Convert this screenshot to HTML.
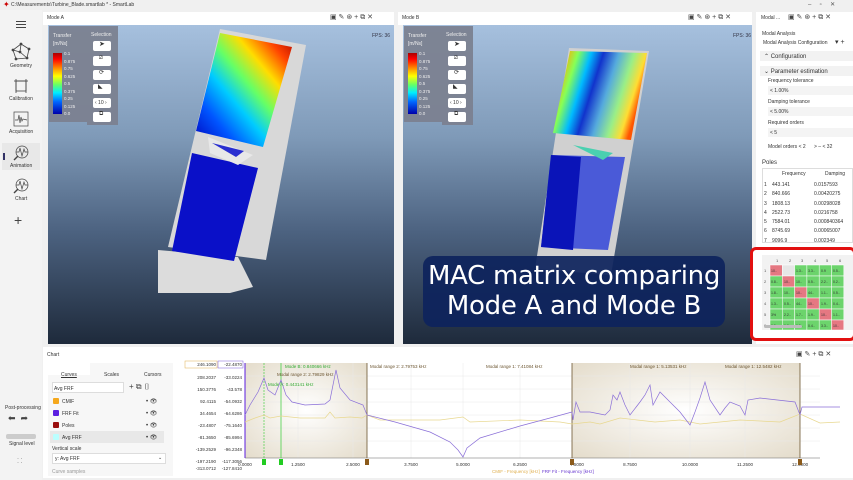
<!DOCTYPE html>
<html><head><meta charset="utf-8"><style>
*{margin:0;padding:0;box-sizing:border-box}
body{width:853px;height:480px;overflow:hidden;background:#f0f0f0;font-family:"Liberation Sans",sans-serif;font-size:5px;color:#333;position:relative}
.abs{position:absolute}
.t{position:absolute;white-space:nowrap}
.vp{background:linear-gradient(#a6c0de 0%,#7f9ab8 35%,#4c6280 65%,#1e2a3b 100%)}
.hdr{background:#fff;height:13px}
.leg{background:#7b8190;opacity:.95}
.btn{position:absolute;background:#fff;border-radius:2px;width:18px;height:10px}
</style></head><body>
<div class="t" style="left:3px;top:0;color:#c00;font-size:8px">✦</div>
<div class="t" style="left:11px;top:2px;font-size:5px">C:\Measurements\Turbine_Blade.smartlab * - SmartLab</div>
<div class="t" style="left:808px;top:1px;font-size:6px;color:#555">–&nbsp;&nbsp;&nbsp;&nbsp;&nbsp;▫&nbsp;&nbsp;&nbsp;&nbsp;&nbsp;✕</div>

<div class="abs" style="left:0;top:10px;width:42px;height:470px;background:#f3f3f3"></div>
<div class="abs" style="left:16px;top:21px;width:10px;height:1px;background:#444;box-shadow:0 3px 0 #444,0 6px 0 #444"></div>
<svg class="abs" style="left:11px;top:42px" width="20" height="20" viewBox="0 0 20 20" fill="none" stroke="#444" stroke-width=".8"><polygon points="10,2 18,7 16,16 5,17 2,8"/><line x1="10" y1="2" x2="9" y2="10"/><line x1="2" y1="8" x2="9" y2="10"/><line x1="16" y1="16" x2="9" y2="10"/><circle cx="10" cy="2" r="1" fill="#444"/><circle cx="18" cy="7" r="1" fill="#444"/><circle cx="16" cy="16" r="1" fill="#444"/><circle cx="5" cy="17" r="1" fill="#444"/><circle cx="2" cy="8" r="1" fill="#444"/><circle cx="9" cy="10" r="1" fill="#444"/></svg>
<div class="t" style="left:10px;top:63px">Geometry</div>
<svg class="abs" style="left:14px;top:79px" width="14" height="14" fill="none" stroke="#444" stroke-width=".8"><rect x="2" y="2" width="10" height="10"/><line x1="0" y1="2" x2="14" y2="2"/><line x1="2" y1="0" x2="2" y2="14"/><line x1="12" y1="0" x2="12" y2="14"/></svg>
<div class="t" style="left:9px;top:96px">Calibration</div>
<svg class="abs" style="left:13px;top:111px" width="16" height="16" fill="none" stroke="#444" stroke-width=".7"><rect x="1" y="1" width="14" height="14"/><path d="M2 9 L5 9 L6 4 L7 12 L8 6 L9 10 L10 8 L14 9"/></svg>
<div class="t" style="left:9px;top:129px">Acquisition</div>
<div class="abs" style="left:2px;top:143px;width:38px;height:27px;background:#e8e8e8"></div>
<div class="abs" style="left:3px;top:153px;width:1.5px;height:7px;background:#336"></div>
<svg class="abs" style="left:13px;top:145px" width="16" height="16" fill="none" stroke="#444" stroke-width=".7"><circle cx="9" cy="7" r="6"/><path d="M3 7 L6 7 L7 3 L9 11 L11 4 L12 7 L15 7"/><line x1="5" y1="11" x2="1" y2="15" stroke-width="1.4"/></svg>
<div class="t" style="left:10px;top:163px">Animation</div>
<svg class="abs" style="left:13px;top:178px" width="16" height="16" fill="none" stroke="#444" stroke-width=".7"><circle cx="9" cy="7" r="6"/><path d="M3 7 L6 7 L7 3 L9 11 L11 4 L12 7 L15 7"/><line x1="5" y1="11" x2="1" y2="15" stroke-width="1.4"/></svg>
<div class="t" style="left:15px;top:196px">Chart</div>
<div class="t" style="left:14px;top:212px;font-size:14px;color:#444">+</div>

<div class="abs hdr" style="left:43px;top:12px;width:351px"></div>
<div class="t" style="left:47px;top:15px">Mode A</div>
<div class="t" style="left:330px;top:13px;font-size:7px;color:#444">▣ ✎ ⊛ + ⧉ ✕</div>
<div class="abs vp" style="left:48px;top:25px;width:346px;height:319px"></div>
<svg class="abs" style="left:48px;top:25px" width="346" height="319">
<defs><linearGradient id="ga" x1="1" y1="0" x2="0" y2="1"><stop offset="0" stop-color="#a00"/><stop offset=".15" stop-color="#f40"/><stop offset=".3" stop-color="#fd0"/><stop offset=".45" stop-color="#6f6"/><stop offset=".6" stop-color="#0cf"/><stop offset=".78" stop-color="#05f"/><stop offset="1" stop-color="#00b"/></linearGradient></defs>
<polygon points="172,4 258,20 218,235 120,222" fill="#d8d8d8"/>
<polygon points="110,225 190,232 205,262 182,268 110,268" fill="#dcdcdc"/>
<polygon points="172,8 244,22 215,122 148,106" fill="url(#ga)"/>
<polygon points="144,128 210,143 186,236 124,226" fill="#0a10c8"/>
<polygon points="160,112 205,130 190,140 162,128" fill="#e8e8e8"/>
<polygon points="164,118 196,126 188,132" fill="#2a2fd0"/>
</svg>
<div class="abs leg" style="left:49px;top:26px;width:38px;height:96px"></div>
<div class="t" style="left:53px;top:33px;color:#eee">Transfer</div>
<div class="t" style="left:53px;top:41px;color:#eee">[m/Ns]</div>
<div class="abs" style="left:53px;top:53px;width:9px;height:61px;background:linear-gradient(#a00,#f00 10%,#fa0 28%,#ff0 38%,#6f6 52%,#0ef 65%,#06f 80%,#00a)"></div>
<div class="t" style="left:64px;top:50px;color:#eee;font-size:4.5px;line-height:7.5px">0.1<br>0.875<br>0.75<br>0.625<br>0.5<br>0.375<br>0.25<br>0.125<br>0.0</div>
<div class="abs leg" style="left:87px;top:26px;width:31px;height:99px"></div>
<div class="t" style="left:91px;top:32px;color:#eee">Selection</div>
<div class="btn" style="left:93px;top:41px"></div><div class="t" style="left:99px;top:40px;font-size:7px">➤</div>
<div class="btn" style="left:93px;top:56px"></div><div class="t" style="left:99px;top:55px;font-size:6px">⧄</div>
<div class="btn" style="left:93px;top:70px"></div><div class="t" style="left:99px;top:69px;font-size:6px">⟳</div>
<div class="btn" style="left:93px;top:84px"></div><div class="t" style="left:98px;top:83px;font-size:6px">◣</div>
<div class="btn" style="left:93px;top:98px"></div><div class="t" style="left:95px;top:100px">‹ 10 ›</div>
<div class="btn" style="left:93px;top:112px"></div><div class="t" style="left:99px;top:111px;font-size:6px">⧉</div>
<div class="t" style="left:372px;top:33px;color:#334">FPS: 36</div>

<div class="abs hdr" style="left:398px;top:12px;width:354px"></div>
<div class="t" style="left:402px;top:15px">Mode B</div>
<div class="t" style="left:688px;top:13px;font-size:7px;color:#444">▣ ✎ ⊛ + ⧉ ✕</div>
<div class="abs vp" style="left:403px;top:25px;width:349px;height:319px"></div>
<svg class="abs" style="left:403px;top:25px" width="349" height="319">
<defs><linearGradient id="gb" x1="0" y1="0" x2="1" y2=".3"><stop offset="0" stop-color="#c00"/><stop offset=".12" stop-color="#fa0"/><stop offset=".25" stop-color="#8f5"/><stop offset=".38" stop-color="#0bf"/><stop offset=".5" stop-color="#13c"/><stop offset=".65" stop-color="#5ad"/><stop offset=".8" stop-color="#9e8"/><stop offset=".92" stop-color="#fd3"/><stop offset="1" stop-color="#f50"/></linearGradient></defs>
<polygon points="166,23 246,26 208,250 132,244" fill="#d0d0d0"/>
<polygon points="167,26 244,28 228,115 150,108" fill="url(#gb)"/>
<polygon points="148,130 222,132 205,225 138,222" fill="#4a5ad8"/>
<polygon points="148,130 178,132 170,225 138,222" fill="#0a14b8"/>
<polygon points="170,120 210,128 200,135" fill="#4ad0b0"/>
</svg>
<div class="abs leg" style="left:404px;top:26px;width:38px;height:96px"></div>
<div class="t" style="left:408px;top:33px;color:#eee">Transfer</div>
<div class="t" style="left:408px;top:41px;color:#eee">[m/Ns]</div>
<div class="abs" style="left:408px;top:53px;width:9px;height:61px;background:linear-gradient(#a00,#f00 10%,#fa0 28%,#ff0 38%,#6f6 52%,#0ef 65%,#06f 80%,#00a)"></div>
<div class="t" style="left:419px;top:50px;color:#eee;font-size:4.5px;line-height:7.5px">0.1<br>0.875<br>0.75<br>0.625<br>0.5<br>0.375<br>0.25<br>0.125<br>0.0</div>
<div class="abs leg" style="left:442px;top:26px;width:31px;height:99px"></div>
<div class="t" style="left:446px;top:32px;color:#eee">Selection</div>
<div class="btn" style="left:448px;top:41px"></div><div class="t" style="left:454px;top:40px;font-size:7px">➤</div>
<div class="btn" style="left:448px;top:56px"></div><div class="t" style="left:454px;top:55px;font-size:6px">⧄</div>
<div class="btn" style="left:448px;top:70px"></div><div class="t" style="left:454px;top:69px;font-size:6px">⟳</div>
<div class="btn" style="left:448px;top:84px"></div><div class="t" style="left:453px;top:83px;font-size:6px">◣</div>
<div class="btn" style="left:448px;top:98px"></div><div class="t" style="left:450px;top:100px">‹ 10 ›</div>
<div class="btn" style="left:448px;top:112px"></div><div class="t" style="left:454px;top:111px;font-size:6px">⧉</div>
<div class="t" style="left:733px;top:33px;color:#334">FPS: 36</div>

<div class="abs" style="left:423px;top:256px;width:302px;height:71px;background:rgba(14,36,92,.93);border-radius:10px"></div>
<div class="t" style="left:423px;top:261px;width:302px;text-align:center;color:#fff;font-size:26px;line-height:30px;font-family:'DejaVu Sans','Liberation Sans',sans-serif;letter-spacing:-.3px">MAC matrix comparing<br>Mode A and Mode B</div>

<div class="abs" style="left:756px;top:12px;width:97px;height:332px;background:#fff"></div>
<div class="t" style="left:761px;top:15px">Modal ...</div>
<div class="t" style="left:788px;top:13px;font-size:7px;color:#444">▣ ✎ ⊛ + ⧉ ✕</div>
<div class="t" style="left:762px;top:31px">Modal Analysis</div>
<div class="t" style="left:763px;top:40px">Modal Analysis Configuration</div>
<div class="t" style="left:835px;top:38px;font-size:7px">▾ +</div>
<div class="abs" style="left:760px;top:51px;width:93px;height:10px;background:#f2f2f2"></div>
<div class="t" style="left:764px;top:53px;font-size:6px">⌃ Configuration</div>
<div class="abs" style="left:760px;top:66px;width:93px;height:10px;background:#f2f2f2"></div>
<div class="t" style="left:764px;top:68px;font-size:6px">⌄ Parameter estimation</div>
<div class="t" style="left:768px;top:78px">Frequency tolerance</div>
<div class="abs" style="left:768px;top:86px;width:85px;height:9px;background:#f4f4f4"></div><div class="t" style="left:770px;top:88px">&lt; 1.00%</div>
<div class="t" style="left:768px;top:99px">Damping tolerance</div>
<div class="abs" style="left:768px;top:107px;width:85px;height:9px;background:#f4f4f4"></div><div class="t" style="left:770px;top:109px">&lt; 5.00%</div>
<div class="t" style="left:768px;top:120px">Required orders</div>
<div class="abs" style="left:768px;top:128px;width:85px;height:9px;background:#f4f4f4"></div><div class="t" style="left:770px;top:130px">&lt; 5</div>
<div class="t" style="left:768px;top:144px">Model orders &lt; 2 &nbsp;&nbsp;&nbsp;&nbsp;&nbsp;&gt; – &lt; 32</div>
<div class="t" style="left:762px;top:160px;font-size:6px">Poles</div>
<div class="abs" style="left:762px;top:168px;width:91px;height:75px;background:#fff;border:1px solid #ddd"></div>
<div class="t" style="left:782px;top:171px">Frequency</div><div class="t" style="left:825px;top:171px">Damping</div>
<div class="t" style="left:764px;top:181px;line-height:9.3px">1<br>2<br>3<br>4<br>5<br>6<br>7</div>
<div class="t" style="left:772px;top:181px;line-height:9.3px">443.141<br>840.666<br>1808.13<br>2522.73<br>7584.01<br>8745.69<br>9096.9</div>
<div class="t" style="left:814px;top:181px;line-height:9.3px">0.0157593<br>0.00420275<br>0.00298028<br>0.0216758<br>0.000840364<br>0.00065007<br>0.002349</div>
<div class="abs" style="left:750px;top:247px;width:106px;height:94px;border:3px solid #e21010;border-radius:6px;background:#fff"></div>
<svg class="abs" style="left:762px;top:255px" width="91" height="75" font-family="Liberation Sans" font-size="4">
<rect width="91" height="75" fill="#f2f2f2"/>
<g fill="#555"><text x="14" y="7">1</text><text x="27" y="7">2</text><text x="39" y="7">3</text><text x="52" y="7">4</text><text x="64" y="7">5</text><text x="77" y="7">6</text>
<text x="2" y="17">1</text><text x="2" y="28">2</text><text x="2" y="39">3</text><text x="2" y="50">4</text><text x="2" y="61">5</text><text x="2" y="72">6</text></g>
<g stroke="#fff" stroke-width=".5">
<rect x="8" y="10" width="12.3" height="11" fill="#e57882"/><rect x="20.3" y="10" width="12.3" height="11" fill="#e6e6e6"/><rect x="32.6" y="10" width="12.3" height="11" fill="#6cd46c"/><rect x="44.9" y="10" width="12.3" height="11" fill="#6cd46c"/><rect x="57.2" y="10" width="12.3" height="11" fill="#6cd46c"/><rect x="69.5" y="10" width="12.3" height="11" fill="#6cd46c"/>
<rect x="8" y="21" width="12.3" height="11" fill="#6cd46c"/><rect x="20.3" y="21" width="12.3" height="11" fill="#e57882"/><rect x="32.6" y="21" width="12.3" height="11" fill="#6cd46c"/><rect x="44.9" y="21" width="12.3" height="11" fill="#6cd46c"/><rect x="57.2" y="21" width="12.3" height="11" fill="#6cd46c"/><rect x="69.5" y="21" width="12.3" height="11" fill="#6cd46c"/>
<rect x="8" y="32" width="12.3" height="11" fill="#6cd46c"/><rect x="20.3" y="32" width="12.3" height="11" fill="#6cd46c"/><rect x="32.6" y="32" width="12.3" height="11" fill="#e57882"/><rect x="44.9" y="32" width="12.3" height="11" fill="#6cd46c"/><rect x="57.2" y="32" width="12.3" height="11" fill="#6cd46c"/><rect x="69.5" y="32" width="12.3" height="11" fill="#6cd46c"/>
<rect x="8" y="43" width="12.3" height="11" fill="#6cd46c"/><rect x="20.3" y="43" width="12.3" height="11" fill="#6cd46c"/><rect x="32.6" y="43" width="12.3" height="11" fill="#6cd46c"/><rect x="44.9" y="43" width="12.3" height="11" fill="#e57882"/><rect x="57.2" y="43" width="12.3" height="11" fill="#6cd46c"/><rect x="69.5" y="43" width="12.3" height="11" fill="#6cd46c"/>
<rect x="8" y="54" width="12.3" height="11" fill="#6cd46c"/><rect x="20.3" y="54" width="12.3" height="11" fill="#6cd46c"/><rect x="32.6" y="54" width="12.3" height="11" fill="#6cd46c"/><rect x="44.9" y="54" width="12.3" height="11" fill="#6cd46c"/><rect x="57.2" y="54" width="12.3" height="11" fill="#e57882"/><rect x="69.5" y="54" width="12.3" height="11" fill="#6cd46c"/>
<rect x="8" y="65" width="12.3" height="10" fill="#6cd46c"/><rect x="20.3" y="65" width="12.3" height="10" fill="#6cd46c"/><rect x="32.6" y="65" width="12.3" height="10" fill="#6cd46c"/><rect x="44.9" y="65" width="12.3" height="10" fill="#6cd46c"/><rect x="57.2" y="65" width="12.3" height="10" fill="#6cd46c"/><rect x="69.5" y="65" width="12.3" height="10" fill="#e57882"/>
</g>
<g fill="#333" font-size="3.5"><text x="9" y="17">10..</text><text x="34" y="17">1.3..</text><text x="46" y="17">3.3..</text><text x="59" y="17">0.9</text><text x="71" y="17">0.5..</text>
<text x="9" y="28">0.8..</text><text x="22" y="28">10..</text><text x="34" y="28">10..</text><text x="46" y="28">0.5..</text><text x="59" y="28">2.2..</text><text x="71" y="28">0.2..</text>
<text x="9" y="39">1.8..</text><text x="22" y="39">10..</text><text x="34" y="39">10..</text><text x="46" y="39">44..</text><text x="59" y="39">1.1..</text><text x="71" y="39">0.5..</text>
<text x="9" y="50">1.3..</text><text x="22" y="50">0.5..</text><text x="34" y="50">44..</text><text x="46" y="50">10..</text><text x="59" y="50">1.9..</text><text x="71" y="50">0.4..</text>
<text x="9" y="61">3%</text><text x="22" y="61">2.2..</text><text x="34" y="61">1.7..</text><text x="46" y="61">1.9..</text><text x="59" y="61">10..</text><text x="71" y="61">1.1..</text>
<text x="9" y="72">0.5..</text><text x="22" y="72">0.2..</text><text x="34" y="72">0.5..</text><text x="46" y="72">0.4..</text><text x="59" y="72">3.3..</text><text x="71" y="72">10..</text></g>
</svg>
<div class="abs" style="left:764px;top:325px;width:38px;height:3px;background:#bbb;border-radius:2px"></div>

<div class="t" style="left:5px;top:405px">Post-processing</div>
<div class="t" style="left:8px;top:413px;font-size:9px;color:#444">⬅ &nbsp;➦</div>
<div class="abs" style="left:6px;top:434px;width:30px;height:5px;background:#ccc;border-radius:2px"></div>
<div class="t" style="left:9px;top:441px">Signal level</div>
<div class="t" style="left:17px;top:457px;font-size:6px;color:#555;line-height:4px">· ·<br>· ·</div>

<div class="abs" style="left:43px;top:347px;width:810px;height:131px;background:#fff"></div>
<div class="t" style="left:47px;top:352px">Chart</div>
<div class="t" style="left:796px;top:350px;font-size:7px;color:#444">▣ ✎ + ⧉ ✕</div>
<div class="abs" style="left:48px;top:363px;width:125px;height:113px;background:#f7f7f7"></div>
<div class="abs" style="left:48px;top:363px;width:42px;height:12px;background:#fff"></div>
<div class="t" style="left:61px;top:372px;text-decoration:underline">Curves</div>
<div class="t" style="left:104px;top:372px">Scales</div>
<div class="t" style="left:144px;top:372px">Cursors</div>
<div class="abs" style="left:52px;top:382px;width:72px;height:11px;background:#fff;border:1px solid #ddd"></div>
<div class="t" style="left:54px;top:386px">Avg FRF</div>
<div class="t" style="left:129px;top:382px;font-size:8px;color:#444">+ ⧉ ▯</div>
<div class="abs" style="left:53px;top:398px;width:6px;height:6px;background:#f5a81c;border-radius:1px"></div><div class="t" style="left:62px;top:399px">CMIF</div>
<div class="abs" style="left:53px;top:410px;width:6px;height:6px;background:#5b1ee0;border-radius:1px"></div><div class="t" style="left:62px;top:411px">FRF Fit</div>
<div class="abs" style="left:53px;top:422px;width:6px;height:6px;background:#9a0f0f;border-radius:1px"></div><div class="t" style="left:62px;top:423px">Poles</div>
<div class="abs" style="left:50px;top:431px;width:114px;height:12px;background:#e8e8e8"></div>
<div class="abs" style="left:53px;top:434px;width:6px;height:6px;background:#bff;border-radius:1px"></div><div class="t" style="left:62px;top:435px">Avg FRF</div>
<div class="t" style="left:146px;top:396px;font-size:6px;line-height:12px">• 👁<br>• 👁<br>• 👁<br>• 👁</div>
<div class="t" style="left:52px;top:446px">Vertical scale</div>
<div class="abs" style="left:52px;top:453px;width:114px;height:11px;background:#fff;border:1px solid #ddd"></div>
<div class="t" style="left:55px;top:456px">y: Avg FRF</div><div class="t" style="left:158px;top:455px">⌄</div>
<div class="t" style="left:52px;top:469px;color:#999">Curve samples</div>

<svg class="abs" style="left:180px;top:360px" width="673" height="118" font-family="Liberation Sans" font-size="4.5">
<defs><radialGradient id="sh" cx=".5" cy=".5" r=".7"><stop offset="0" stop-color="#fff"/><stop offset="1" stop-color="#e4dccb"/></radialGradient></defs>
<rect x="65" y="3" width="122" height="95" fill="url(#sh)"/>
<rect x="392" y="3" width="228" height="95" fill="url(#sh)"/>
<g stroke="#e8e8e8" stroke-width=".5"><line x1="65" y1="16" x2="640" y2="16"/><line x1="65" y1="29" x2="640" y2="29"/><line x1="65" y1="42" x2="640" y2="42"/><line x1="65" y1="55" x2="640" y2="55"/><line x1="65" y1="68" x2="640" y2="68"/><line x1="65" y1="81" x2="640" y2="81"/><line x1="118" y1="3" x2="118" y2="98"/><line x1="173" y1="3" x2="173" y2="98"/><line x1="231" y1="3" x2="231" y2="98"/><line x1="283" y1="3" x2="283" y2="98"/><line x1="340" y1="3" x2="340" y2="98"/><line x1="450" y1="3" x2="450" y2="98"/><line x1="510" y1="3" x2="510" y2="98"/><line x1="565" y1="3" x2="565" y2="98"/></g>
<line x1="65" y1="3" x2="65" y2="98" stroke="#5b1ee0" stroke-width="1"/>
<line x1="65" y1="98" x2="640" y2="98" stroke="#666" stroke-width=".6"/>
<line x1="187" y1="3" x2="187" y2="98" stroke="#6b5530" stroke-width=".8"/>
<line x1="392" y1="3" x2="392" y2="98" stroke="#6b5530" stroke-width=".8"/>
<line x1="620" y1="3" x2="620" y2="98" stroke="#6b5530" stroke-width=".8"/>
<line x1="84" y1="3" x2="84" y2="98" stroke="#3c3" stroke-width=".6" stroke-dasharray="2,1"/>
<line x1="101" y1="3" x2="101" y2="98" stroke="#3c3" stroke-width=".7"/>
<polyline fill="none" stroke="#e8d890" stroke-width=".7" points="65,62 75,58 84,55 90,58 101,56 120,58 145,58 150,52 155,58 170,57 182,58 187,55 200,60 230,60 260,60 283,57 290,62 340,60 380,62 392,64 410,62 420,64 440,58 475,62 500,60 520,64 560,60 600,62 620,54 640,63 660,62"/>
<polyline fill="none" stroke="#8a6fd8" stroke-width=".7" points="65,55 70,45 78,32 84,18 88,30 95,35 101,20 106,35 112,42 125,45 145,44 150,40 153,25 156,10 160,28 170,40 183,45 187,55 215,62 250,72 270,82 278,90 283,97 287,88 300,78 340,66 370,58 392,52 393,60 396,42 400,52 410,52 425,55 430,50 433,35 437,40 440,32 445,45 450,55 460,42 465,35 470,25 473,45 480,32 490,42 500,52 510,65 515,52 520,38 525,22 530,40 540,55 545,48 550,42 560,46 565,55 568,40 580,38 615,42 620,55 622,47 640,47 660,47"/>
<rect x="5" y="1" width="32" height="7" fill="#fff" stroke="#e0b050" stroke-width=".5"/>
<rect x="38" y="1" width="25" height="7" fill="#fff" stroke="#7a5ad8" stroke-width=".5"/>
<g fill="#333" text-anchor="end"><text x="36" y="6">246.1090</text><text x="36" y="19">208.2037</text><text x="36" y="31">150.3776</text><text x="36" y="43">92.4115</text><text x="36" y="55">34.4654</text><text x="36" y="67">-23.4807</text><text x="36" y="79">-81.3650</text><text x="36" y="91">-139.2529</text><text x="36" y="103">-197.2190</text><text x="36" y="110">-313.0712</text>
<text x="62" y="6">-22.4870</text><text x="62" y="19">-33.0224</text><text x="62" y="31">-43.578</text><text x="62" y="43">-54.0932</text><text x="62" y="55">-64.6286</text><text x="62" y="67">-75.1640</text><text x="62" y="79">-85.6994</text><text x="62" y="91">-96.2348</text><text x="62" y="103">-117.3056</text><text x="62" y="110">-127.8410</text></g>
<g fill="#333" text-anchor="middle"><text x="65" y="106">0.0000</text><text x="118" y="106">1.2500</text><text x="173" y="106">2.5000</text><text x="231" y="106">3.7500</text><text x="283" y="106">5.0000</text><text x="340" y="106">6.2500</text><text x="397" y="106">7.5000</text><text x="450" y="106">8.7500</text><text x="510" y="106">10.0000</text><text x="565" y="106">11.2500</text><text x="620" y="106">12.5000</text></g>
<g fill="#3a3" ><text x="105" y="8">Mode B: 0.840666 kHz</text><text x="88" y="26">Mode A: 0.443141 kHz</text></g>
<g fill="#6b5530"><text x="97" y="16">Modal range 2: 2.79829 kHz</text><text x="190" y="8">Modal range 2: 2.79753 kHz</text><text x="306" y="8">Modal range 1: 7.41084 kHz</text><text x="450" y="8">Modal range 1: 5.13531 kHz</text><text x="545" y="8">Modal range 1: 12.5482 kHz</text></g>
<rect x="82" y="99" width="4" height="6" fill="#2c2"/><rect x="99" y="99" width="4" height="6" fill="#2c2"/><rect x="185" y="99" width="4" height="6" fill="#8b5a1a"/><rect x="390" y="99" width="4" height="6" fill="#8b5a1a"/><rect x="618" y="99" width="4" height="6" fill="#8b5a1a"/>
<text x="312" y="113" fill="#e0b050">CMIF - Frequency [kHz]</text><text x="362" y="113" fill="#6a3ad0">FRF Fit - Frequency [kHz]</text>
</svg>
</body></html>
